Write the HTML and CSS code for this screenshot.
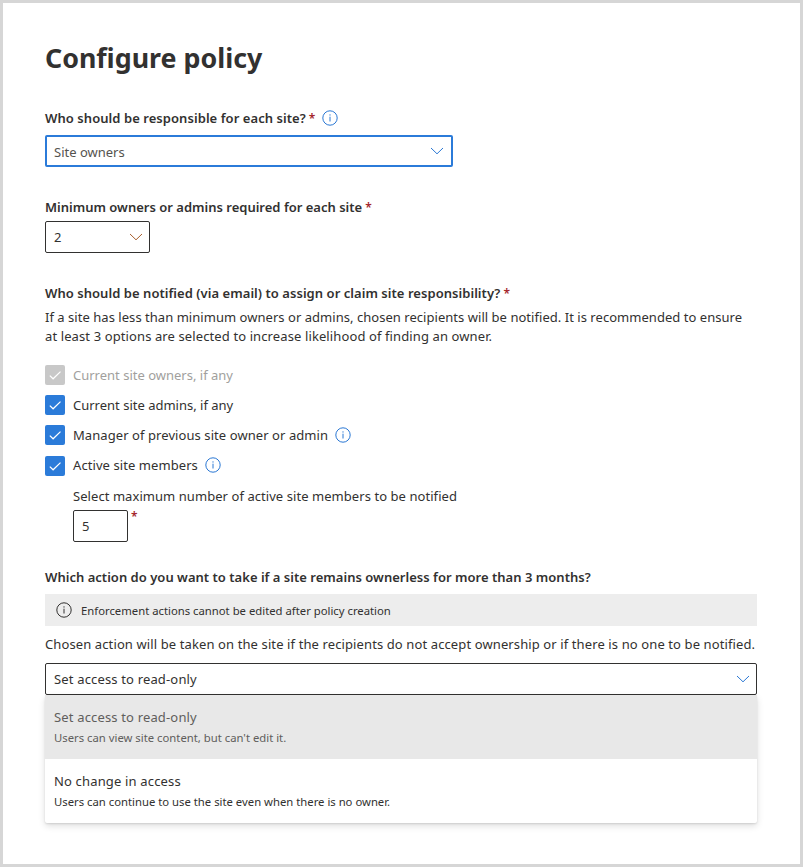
FILE: index.html
```
<!DOCTYPE html>
<html lang="en">
<head>
<meta charset="utf-8">
<title>Configure policy</title>
<link rel="stylesheet" href="styles.css">
</head>
<body>
<svg width="0" height="0" class="defs" aria-hidden="true">
  <symbol id="info" viewBox="0 0 16 16"><circle cx="8" cy="8" r="7.2" fill="none" stroke="currentColor" stroke-width="1"/><path d="M8 6.7v4.8M8 4.3v1.3" fill="none" stroke="currentColor" stroke-width="1"/></symbol>
  <symbol id="chevron" viewBox="0 0 14 8"><path d="M1 1l6 5.8L13 1" fill="none" stroke="currentColor" stroke-width="1"/></symbol>
  <symbol id="check" viewBox="0 0 20 20"><path d="M4.8 10.6l3.3 3.2 7.4-7.2" fill="none" stroke="currentColor" stroke-width="1.2"/></symbol>
</svg>
<main class="panel">
  <h1 class="title">Configure policy</h1>

  <div class="label loose">Who should be responsible for each site?<b class="req">*</b><svg class="info"><use href="#info"/></svg></div>
  <div class="select focused"><span>Site owners</span><svg class="chev"><use href="#chevron"/></svg></div>

  <div class="label row-minimum">Minimum owners or admins required for each site<b class="req">*</b></div>
  <div class="select small"><span>2</span><svg class="chev warm"><use href="#chevron"/></svg></div>

  <div class="label row-notified">Who should be notified (via email) to assign or claim site responsibility?<b class="req">*</b></div>
  <p class="hint">If a site has less than minimum owners or admins, chosen recipients will be notified. It is recommended to ensure<br><span class="hint-end">at least 3 options are selected to increase likelihood of finding an owner.</span></p>

  <div class="checks">
    <div class="check disabled"><svg class="box"><use href="#check"/></svg><span>Current site owners, if any</span></div>
    <div class="check"><svg class="box"><use href="#check"/></svg><span>Current site admins, if any</span></div>
    <div class="check loose"><svg class="box"><use href="#check"/></svg><span>Manager of previous site owner or admin</span><svg class="info"><use href="#info"/></svg></div>
    <div class="check loose"><svg class="box"><use href="#check"/></svg><span>Active site members</span><svg class="info"><use href="#info"/></svg></div>
  </div>
  <div class="members">
    <div class="text loose">Select maximum number of active site members to be notified</div>
    <div class="members-row"><div class="input">5</div><b class="req">*</b></div>
  </div>

  <div class="label row-action">Which action do you want to take if a site remains ownerless for more than 3 months?</div>
  <div class="notice"><svg class="info"><use href="#info"/></svg><span>Enforcement actions cannot be edited after policy creation</span></div>
  <div class="text chosen">Chosen action will be taken on the site if the recipients do not accept ownership or if there is no one to be notified.</div>
  <div class="select wide"><span>Set access to read-only</span><svg class="chev"><use href="#chevron"/></svg></div>
  <div class="menu">
    <div class="option selected"><div class="name">Set access to read-only</div><div class="desc">Users can view site content, but can't edit it.</div></div>
    <div class="option"><div class="name">No change in access</div><div class="desc">Users can continue to use the site even when there is no owner.</div></div>
  </div>
</main>
</body>
</html>
```
FILE: styles.css
```
* { box-sizing: border-box; }
body { margin: 0; background: #fff; color: #323130; font: 13px/20px "Noto Sans", "Open Sans", sans-serif; }
.defs { position: absolute; }
.panel { width: 803px; height: 867px; border: 3px solid #d6d6d6; padding: 35px 43px 0 42px; white-space: nowrap; }
.title { margin: 0 0 30px; font-size: 26.8px; line-height: 40px; font-weight: 700; }
.label { display: flex; align-items: center; height: 20px; font-weight: 600; letter-spacing: .02px; }
.loose { letter-spacing: .06px; }
.req { margin: 1px 0 0 3px; color: #a4262c; font-size: 12px; font-weight: 600; }
.info { width: 16px; height: 16px; margin-left: 7px; color: #2b78d4; flex: none; }
.select { display: flex; align-items: center; justify-content: space-between; height: 32px; padding: 0 6px 0 8px; border: 1px solid #323130; border-radius: 2px; background: #fff; }
.focused { width: 408px; margin-top: 7px; border: 2px solid #2b7bd9; padding: 0 7px; color: #55534f; }
.focused span { padding-top: 2px; }
.small { width: 105px; margin-top: 4px; }
.wide, .name { letter-spacing: .16px; }
.chev { width: 14px; height: 8px; color: #2b78d4; }
.warm { color: #a8602f; }
.row-minimum { margin-top: 30px; letter-spacing: 0; }
.row-notified { margin-top: 30px; letter-spacing: .045px; }
.hint { margin: 5px 0 0; line-height: 19px; letter-spacing: .036px; }
.hint-end { letter-spacing: .11px; }
.checks { display: flex; flex-direction: column; gap: 10px; margin-top: 19px; }
.check { display: flex; align-items: center; height: 20px; }
.check:last-child { margin-top: 1px; }
.check:last-child span, .check:last-child .info { margin-top: -2px; }
.check.loose { letter-spacing: .075px; }
.box { width: 20px; height: 20px; margin-right: 8px; border-radius: 2px; background: #2b7bd9; color: #fff; }
.disabled { color: #a19f9d; }
.disabled .box { background: #c8c8c8; }
.members { margin: 10px 0 0 28px; }
.text { height: 20px; }
.members-row { display: flex; margin-top: 4px; line-height: 12px; }
.input { width: 55px; height: 32px; padding-left: 8px; line-height: 31px; border: 1px solid #323130; border-radius: 2px; }
.row-action { margin-top: 25px; }
.notice { display: flex; align-items: center; height: 32px; margin-top: 7px; padding-left: 11px; background: #ededed; font-size: 11.3px; }
.notice span { padding-top: 2px; }
.notice .info { margin: 0 9px 0 0; color: #323130; }
.chosen { margin: 8px 0 9px; letter-spacing: .11px; }
.menu { box-shadow: 0 3px 7px rgba(0,0,0,.13), 0 1px 2px rgba(0,0,0,.11); border-radius: 2px; }
.option { height: 64px; padding: 12px 9px 0; }
.desc { padding-top: 1px; font-size: 11.3px; }
.selected { background: #e8e8e8; color: #605e5c; }
```
